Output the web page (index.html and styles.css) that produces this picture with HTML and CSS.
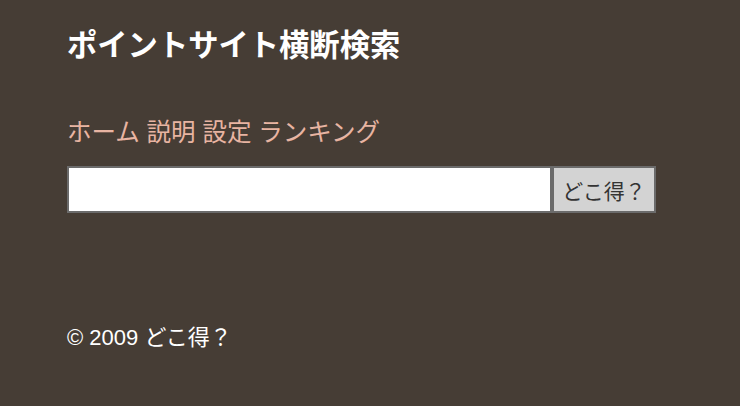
FILE: index.html
```html
<!DOCTYPE html>
<html lang="ja">
<head>
<meta charset="utf-8">
<title>ポイントサイト横断検索</title>
<link rel="stylesheet" href="styles.css">
</head>
<body>
<div class="page">
  <h1 class="title">ポイントサイト横断検索</h1>
  <nav class="nav">
    <a href="#">ホーム</a>
    <a href="#">説明</a>
    <a href="#">設定</a>
    <a href="#">ランキング</a>
  </nav>
  <form class="search">
    <input class="search-input" type="text">
    <button class="search-btn" type="button">どこ得？</button>
  </form>
  <footer class="footer">© 2009 どこ得？</footer>
</div>
</body>
</html>
```
FILE: styles.css
```css
html, body {
  margin: 0;
  padding: 0;
  background: #463d35;
}
body {
  font-family: "Liberation Sans", "Noto Sans CJK JP", sans-serif;
  color: #ffffff;
}
.page {
  padding: 26px 0 0 67px;
}
.title {
  margin: 0;
  font-size: 30.3px;
  line-height: 40px;
  font-weight: bold;
  color: #ffffff;
}
.nav {
  margin-top: 52px;
  font-size: 24.5px;
  line-height: 30px;
}
.nav a {
  color: #e8b4a2;
  text-decoration: none;
}
.search {
  display: flex;
  margin-top: 18px;
}
.search-input {
  box-sizing: border-box;
  width: 485px;
  height: 47px;
  margin: 0;
  border: 2px solid #6b6b6b;
  background: #ffffff;
  font-size: 20px;
}
.search-btn {
  box-sizing: border-box;
  width: 104px;
  height: 47px;
  margin: 0;
  border: 2px solid #6b6b6b;
  background: #d3d3d3;
  color: #333;
  font-family: "Liberation Sans", "Noto Sans CJK JP", sans-serif;
  font-size: 21px;
  padding: 0;
}
.footer {
  margin-top: 111px;
  font-size: 22px;
  line-height: 28px;
}
```
